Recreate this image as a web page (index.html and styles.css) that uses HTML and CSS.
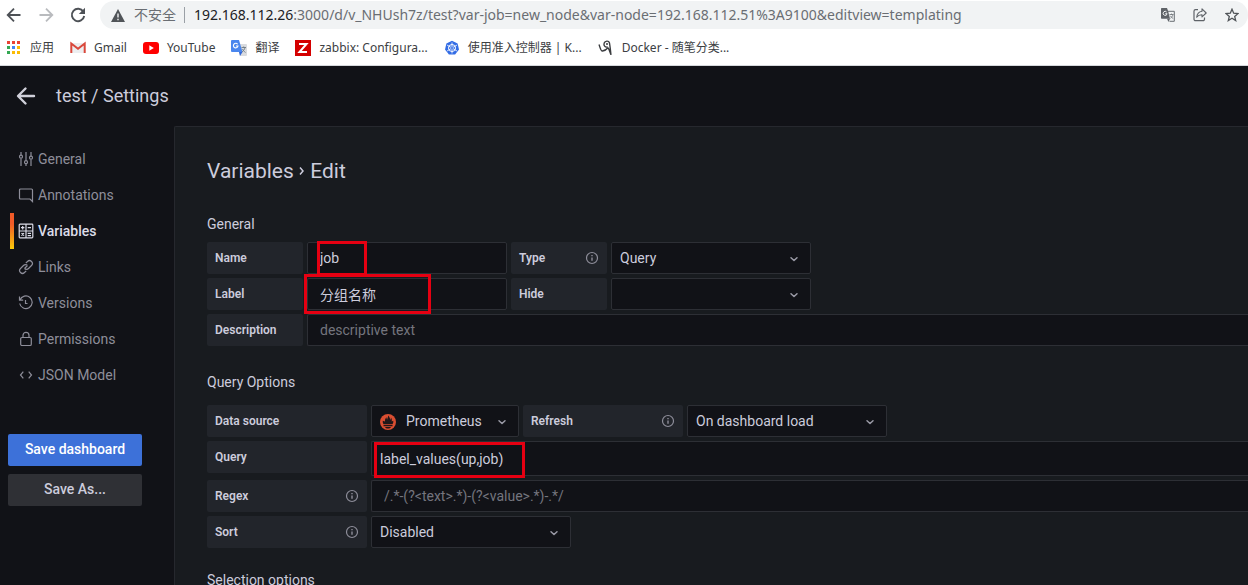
FILE: index.html
```html
<!DOCTYPE html>
<html lang="zh-CN">
<head>
<meta charset="utf-8">
<title>test / Settings</title>
<link rel="stylesheet" href="styles.css">
</head>
<body>
<svg class="defs" aria-hidden="true">
  <symbol id="chevron" viewBox="0 0 16 16"><path d="M5 6.700 8 9.500l3-2.800" fill="none" stroke="currentColor" stroke-width="1.500" stroke-linecap="round" stroke-linejoin="round"/></symbol>
  <symbol id="info" viewBox="0 0 14 14"><circle cx="7" cy="7" r="5.500" fill="none" stroke="currentColor" stroke-width="1.200"/><path d="M7 6.500v3.200M7 4v1.200" stroke="currentColor" stroke-width="1.400"/></symbol>
  <symbol id="gtranslate" viewBox="0 0 16 16"><path d="M6 4h9a1 1 0 0 1 1 1v10a1 1 0 0 1-1 1H9z" fill="#dadce0"/><path d="M1 0h7l3.500 12H1a1 1 0 0 1-1-1V1a1 1 0 0 1 1-1z" fill="#4a86ee"/><path d="m8 12 3.500 0L9 16z" fill="#3367d6"/><path d="M6.600 4.200A2.300 2.300 0 1 0 7 6H4.900" fill="none" stroke="#fff" stroke-width="1.100"/><path d="M10.500 7.500H15M12.700 6.500v1M14 7.500c-.5 2-1.500 3.300-3 4.500M11.500 9c.6 1.400 1.500 2.500 3 3.500" fill="none" stroke="#6f7b85" stroke-width=".9"/></symbol>
</svg>

<div class="app">
  <header class="browser">
    <div class="toolbar">
      <nav class="nav-buttons" aria-label="Navigation">
        <button class="tool" aria-label="Back"><svg width="16" height="16" viewBox="0 0 16 16"><path d="M14.500 8H2M8 1.700 1.700 8 8 14.300" fill="none" stroke="#4d5156" stroke-width="1.800"/></svg></button>
        <button class="tool" aria-label="Forward"><svg width="16" height="16" viewBox="0 0 16 16"><path d="M1.500 8H14M8 1.700 14.300 8 8 14.300" fill="none" stroke="#b9bbbe" stroke-width="1.800"/></svg></button>
        <button class="tool" aria-label="Reload"><svg width="16" height="16" viewBox="0 0 16 16"><path d="M13.300 4.600A6.200 6.200 0 1 0 14.200 9" fill="none" stroke="#4d5156" stroke-width="1.900"/><path d="M15 .8v6.200H8.800z" fill="#4d5156"/></svg></button>
      </nav>
      <div class="omnibox">
        <svg width="14" height="13" viewBox="0 0 14 13"><path d="M7 0l7 13H0z" fill="#505458"/><path d="M7 4.500v4M7 9.700v1.500" stroke="#f1f3f4" stroke-width="1.400"/></svg>
        <span class="insecure">不安全</span>
        <span class="url"><b>192.168.112.26</b>:3000/d/v_NHUsh7z/test?var-job=new_node&amp;var-node=192.168.112.51%3A9100&amp;editview=templating</span>
        <div class="omni-actions">
          <button class="tool" aria-label="Translate"><svg width="14" height="14" viewBox="0 0 14 14"><path d="M7 3.300h6.300v10H8.500" fill="none" stroke="#6a6e73" stroke-width="1"/><path d="M.7 0h5.300l1 2.700L9 10.700H.7A.7.700 0 0 1 0 10V.7A.7.700 0 0 1 .7 0z" fill="#5f6368"/><path d="m6 10.700h3L7.500 14z" fill="#5f6368"/><path d="M5.700 4.100A2 2 0 1 0 6.100 5.700H4.300" fill="none" stroke="#f1f3f4" stroke-width="1"/><path d="M8.500 6.500h4M10.500 5.600v1M12 6.500c-.5 1.800-1.300 2.800-2.500 3.800M9.400 7.800c.6 1.200 1.400 2 2.800 2.700" fill="none" stroke="#6a6e73" stroke-width=".8"/></svg></button>
          <button class="tool" aria-label="Share"><svg width="14" height="14" viewBox="0 0 14 14"><path d="M5 1.700H2.500a1.500 1.500 0 0 0-1.500 1.500v8A1.500 1.500 0 0 0 2.500 12.700h7.500a1.500 1.500 0 0 0 1.500-1.500V9.500" fill="none" stroke="#5f6368" stroke-width="1.200"/><path d="M9 .9 13.200 5 9 8.900V6.700C6.500 6.600 4.900 7.500 3.700 9.200 4 6.200 5.600 3.800 9 3.300z" fill="none" stroke="#5f6368" stroke-width="1.100" stroke-linejoin="round"/></svg></button>
          <button class="tool" aria-label="Bookmark"><svg width="14" height="14" viewBox="0 0 14 14"><path d="m7 1.200 1.700 4 4.300.4-3.300 2.800 1 4.200L7 10.300l-3.700 2.300 1-4.200L1 5.600l4.300-.4z" fill="none" stroke="#505458" stroke-width="1.300"/></svg></button>
        </div>
      </div>
    </div>
    <nav class="bookmarks" aria-label="Bookmarks">
      <a href="#"><svg width="13" height="13" viewBox="0 0 13 13"><path d="M0 0h3v3H0zM5 0h3v3H5zM10 0h3v3h-3z" fill="#ea4335"/><path d="M0 5h3v3H0zM0 10h3v3H0z" fill="#34a853"/><path d="M5 5h3v3H5z" fill="#4285f4"/><path d="M10 5h3v3h-3zM5 10h3v3H5zM10 10h3v3h-3z" fill="#fbbc04"/></svg>应用</a>
      <a href="#"><svg width="16" height="16" viewBox="0 0 16 16"><path d="M2 3h12v10H2z" fill="#eceef0"/><path d="M1.300 13V3.500L8 8.700l6.700-5.200V13" fill="none" stroke="#d9483b" stroke-width="2"/></svg>Gmail</a>
      <a href="#"><svg width="16" height="16" viewBox="0 0 16 16"><rect y="2" width="16" height="12" rx="3" fill="#f00"/><path d="m6.300 5.300 4.500 2.700-4.500 2.700z" fill="#fff"/></svg>YouTube</a>
      <a href="#"><svg width="16" height="16"><use href="#gtranslate"/></svg>翻译</a>
      <a href="#"><svg width="16" height="16" viewBox="0 0 16 16"><path d="M0 0h16v16H0z" fill="#d40000"/><path d="M4 3.900h7.500L4.500 12H12" fill="none" stroke="#fff" stroke-width="2"/></svg>zabbix: Configura...</a>
      <a href="#"><svg width="16" height="16" viewBox="0 0 16 16"><path d="m8 .8 5.600 2.700L15 9.600l-3.900 5H4.900l-3.900-5 1.400-6.100z" fill="#326ce5"/><circle cx="8" cy="8" r="3.500" fill="none" stroke="#fff" stroke-width="1"/><path d="M8 2.500v11M3 5l10 6M3 11l10-6" stroke="#fff" stroke-width=".8"/><circle cx="8" cy="8" r="1" fill="#326ce5"/></svg>使用准入控制器 | K...</a>
      <a href="#"><svg width="16" height="16" viewBox="0 0 16 16"><path d="M1 4.500C2.300 7.500 2.500 11.300 4.500 11c2.200-.4 4-1.500 5.500-3.300M9.700 7C7 7.500 5.300 5.500 6.200 3 7 .7 10.700.3 11.400 2.800c.6 2.400.9 6.500 1.600 12.200M10 7.700c1.200 1.800 2 4.500 3 7" fill="none" stroke="#3b3d40" stroke-width="1.400"/><circle cx="9" cy="4" r="1" fill="#3b3d40"/></svg>Docker - 随笔分类...</a>
    </nav>
  </header>

  <div class="grafana">
    <header class="page-head">
      <button class="tool" aria-label="Go back"><svg width="20" height="20" viewBox="0 0 20 20"><path d="M18 10H2.500M9.500 2.500 2 10l7.500 7.500" fill="none" stroke="#d0d0da" stroke-width="2.400" stroke-linecap="round" stroke-linejoin="round"/></svg></button>
      <h1>test / Settings</h1>
    </header>
    <div class="columns">
      <aside class="sidebar">
        <nav class="menu">
          <a href="#"><svg viewBox="0 0 16 16"><path d="M3 1v3M3 7.500V15M8 1v8.500M8 13v2M13 1v4M13 8.500V15"/><circle cx="3" cy="5.700" r="1.500"/><circle cx="8" cy="11.200" r="1.500"/><circle cx="13" cy="6.700" r="1.500"/></svg>General</a>
          <a href="#"><svg viewBox="0 0 16 16"><path d="M2.500 2h11a1 1 0 0 1 1 1v11.500L12 12H2.500a1 1 0 0 1-1-1V3a1 1 0 0 1 1-1z"/></svg>Annotations</a>
          <a href="#" class="active"><svg viewBox="0 0 16 16"><path d="M2 1.200h12a.8.800 0 0 1 .8.800v12a.8.800 0 0 1-.8.800H2a.8.800 0 0 1-.8-.8V2A.8.800 0 0 1 2 1.200zM8 1v14M1 8h14M3 4.700h3.400M4.700 3v3.400M9.700 4.700H13M3.500 10.200l2.500 2.500M6 10.200l-2.500 2.500M9.700 10.300H13M9.700 12.700H13"/></svg>Variables</a>
          <a href="#"><svg viewBox="0 0 16 16"><path d="M6.500 9.500a2.800 2.800 0 0 0 4 0l3-3A2.800 2.800 0 0 0 9.500 2.500L7.800 4.200M9.500 6.500a2.800 2.800 0 0 0-4 0l-3 3a2.800 2.800 0 0 0 4 4l1.700-1.700M6.500 9.500l3-3"/></svg>Links</a>
          <a href="#"><svg viewBox="0 0 16 16"><path d="M1.500 1.500v3.700h3.700M2 5A6.300 6.300 0 1 1 1.700 8.500M7.500 5v3.500h2"/></svg>Versions</a>
          <a href="#"><svg viewBox="0 0 16 16"><path d="M4 6.500h8a1.300 1.300 0 0 1 1.300 1.300v5.400A1.300 1.300 0 0 1 12 14.500H4a1.300 1.300 0 0 1-1.300-1.300V7.800A1.300 1.300 0 0 1 4 6.500zM5 6.500V4.300a3 3 0 0 1 6 0v2.200"/></svg>Permissions</a>
          <a href="#"><svg viewBox="0 0 16 16"><path d="M5.300 4.700 2.500 8l2.800 3.300M10.700 4.700 13.500 8l-2.800 3.300"/></svg>JSON Model</a>
        </nav>
        <div class="actions">
          <button class="btn primary">Save dashboard</button>
          <button class="btn">Save As...</button>
        </div>
      </aside>

      <main class="panel">
        <h2>Variables <svg width="8" height="10" viewBox="0 0 8 10"><path d="m2 1.500 3 3.500-3 3.500" fill="none" stroke="currentColor" stroke-width="1.500"/></svg> Edit</h2>

        <section class="group">
          <h3>General</h3>
          <div class="row">
            <label class="label" for="name">Name</label>
            <div class="field marked mark-name"><input id="name" type="text" value="job"></div>
            <label class="label" for="type">Type <svg class="info"><use href="#info"/></svg></label>
            <div class="field"><select id="type"><option>Query</option></select><svg class="chevron"><use href="#chevron"/></svg></div>
          </div>
          <div class="row">
            <label class="label" for="label">Label</label>
            <div class="field marked mark-label"><input id="label" type="text" value="分组名称"></div>
            <label class="label" for="hide">Hide</label>
            <div class="field"><select id="hide"><option></option></select><svg class="chevron"><use href="#chevron"/></svg></div>
          </div>
          <div class="row">
            <label class="label" for="desc">Description</label>
            <div class="field wide"><input id="desc" type="text" placeholder="descriptive text"></div>
          </div>
        </section>

        <section class="group query">
          <h3>Query Options</h3>
          <div class="row">
            <label class="label" for="source">Data source</label>
            <div class="field source">
              <svg class="logo" viewBox="0 0 16 16"><circle cx="8" cy="8" r="8" fill="#da4e31"/><path d="M3.500 10.200h9c.8-1.200 1-2.300.7-3.400l-1.500.7c.4-1.600 0-2.800-.8-3.900.1 1.100-.3 1.900-.6 2.500C10.200 4.300 9.300 3 8.300 1.500 8.100 3 7.500 4 7.100 5.800 6.700 5 6.500 4.200 6.500 3.300 5.200 4.800 4.800 6 5 7.500l-2.200-.7c-.2 1.300 0 2.300.7 3.400zM3.500 11h9v1.300h-9zM5 13h6c-.6 1.100-1.600 1.600-3 1.600S5.600 14.100 5 13z" fill="#201719"/></svg>
              <select id="source"><option>Prometheus</option></select><svg class="chevron"><use href="#chevron"/></svg>
            </div>
            <label class="label" for="refresh">Refresh <svg class="info"><use href="#info"/></svg></label>
            <div class="field"><select id="refresh"><option>On dashboard load</option></select><svg class="chevron"><use href="#chevron"/></svg></div>
          </div>
          <div class="row">
            <label class="label" for="query">Query</label>
            <div class="field wide tall marked mark-query"><input id="query" type="text" value="label_values(up,job)"></div>
          </div>
          <div class="row">
            <label class="label" for="regex">Regex <svg class="info"><use href="#info"/></svg></label>
            <div class="field wide"><input id="regex" type="text" placeholder="/.*-(?&lt;text&gt;.*)-(?&lt;value&gt;.*)-.*/"></div>
          </div>
          <div class="row">
            <label class="label" for="sort">Sort <svg class="info"><use href="#info"/></svg></label>
            <div class="field"><select id="sort"><option>Disabled</option></select><svg class="chevron"><use href="#chevron"/></svg></div>
          </div>
        </section>

        <section class="group">
          <h3>Selection options</h3>
        </section>
      </main>
    </div>
  </div>
</div>
</body>
</html>
```
FILE: styles.css
```css
*, *::after { box-sizing: border-box; }

body {
  margin: 0;
  background: #111217;
  font: 14px/20px Roboto, "Noto Sans CJK SC", sans-serif;
}

button, input, select { font: inherit; color: inherit; }
a { color: inherit; text-decoration: none; }
h1, h2, h3 { margin: 0; font-weight: 400; }

.defs { position: absolute; width: 0; height: 0; }

.app {
  display: flex;
  flex-direction: column;
  height: 100vh;
  overflow: hidden;
}

.tool {
  display: flex;
  padding: 0;
  border: 0;
  background: none;
}

/* Browser chrome */
.browser {
  flex: none;
  background: #fff;
  border-bottom: 1px solid #d5d8dc;
  color: #3c4043;
  font-family: "Noto Sans", "Noto Sans CJK SC", sans-serif;
}

.toolbar {
  display: flex;
  align-items: center;
  gap: 14px;
  padding: 1px 0 1px 6px;
}

.nav-buttons { display: flex; gap: 16px; }

.omnibox {
  display: flex;
  flex: 1;
  align-items: center;
  height: 28px;
  padding: 0 9px 0 11px;
  border-radius: 14px;
  background: #f1f3f4;
  color: #6a6e73;
  white-space: nowrap;
}

.insecure {
  margin: 0 8px 0 9px;
  line-height: 16px;
}

.url {
  flex: 1;
  padding-left: 9px;
  border-left: 1px solid #9aa0a6;
  line-height: 16px;
}

.url b { color: #202124; font-weight: 400; }

.omni-actions { display: flex; gap: 18px; }

.bookmarks {
  display: flex;
  align-items: center;
  gap: 16px;
  height: 35px;
  padding: 0 7px;
  font-size: 12px;
  white-space: nowrap;
}

.bookmarks a {
  display: flex;
  align-items: center;
  gap: 8px;
}

.bookmarks a:first-child { gap: 10px; }

/* Settings page */
.grafana {
  display: flex;
  flex: 1;
  flex-direction: column;
  min-height: 0;
  color: #ccccdc;
}

.page-head {
  display: flex;
  flex: none;
  align-items: center;
  gap: 20px;
  height: 60px;
  padding: 0 16px;
}

.page-head h1 { font-size: 18px; line-height: 24px; }

.columns { display: flex; flex: 1; min-height: 0; }

.sidebar { flex: none; width: 174px; padding-top: 15px; }

.menu a {
  display: flex;
  align-items: center;
  gap: 4px;
  height: 36px;
  padding-left: 18px;
  color: #8e8e9a;
}

.menu svg {
  width: 16px;
  height: 16px;
  fill: none;
  stroke: currentColor;
  stroke-width: 1.2;
}

.menu .active {
  margin-left: 10px;
  padding-left: 8px;
  background: linear-gradient(#f05a28 30%, #fbca0a) left / 4px 100% no-repeat;
  color: #dcdce8;
  font-weight: 500;
}

.actions {
  display: flex;
  flex-direction: column;
  gap: 8px;
  padding: 41px 32px 0 8px;
}

.btn {
  height: 32px;
  padding: 0 0 2px;
  border: 0;
  border-radius: 2px;
  background: #2f3035;
  font-weight: 500;
}

.btn.primary { background: #3d71d9; color: #fff; }

.panel {
  flex: 1;
  min-width: 0;
  padding: 30px 0 0 32px;
  overflow: hidden;
  border: 1px solid #26282e;
  border-width: 1px 0 0 1px;
  border-radius: 2px 0 0 0;
  background: #181b1f;
}

.panel h2 {
  margin-bottom: 29px;
  font-size: 21px;
  line-height: 28px;
}

.panel h2 svg { margin: 0 -1px; vertical-align: 2px; }

.group { margin-bottom: 22px; }

.group h3 {
  margin-bottom: 8px;
  font-size: 14px;
  line-height: 20px;
}

.group.query { padding-top: 4px; }
.group.query h3 { margin-bottom: 13px; }

.row { display: flex; gap: 4px; margin-bottom: 4px; }

.label {
  display: flex;
  flex: none;
  align-items: center;
  justify-content: space-between;
  width: 96px;
  height: 32px;
  padding: 0 8px;
  border-radius: 2px;
  background: #22252b;
  font-size: 12px;
  font-weight: 600;
}

.query .label { width: 160px; }

.info { width: 14px; height: 14px; color: #8e8e9a; }

.field {
  position: relative;
  flex: none;
  width: 200px;
  height: 32px;
}

.field.source { width: 148px; }
.field.wide { flex: 1; }
.field.tall { height: 35px; }

.field input,
.field select {
  display: block;
  width: 100%;
  height: 100%;
  padding: 0 12px;
  border: 1px solid #2d2f35;
  border-radius: 2px;
  background: #111217;
  outline: 0;
}

.field select { padding: 0 8px; appearance: none; }
.field.source select { padding-left: 34px; }
.field.wide input { border-right: 0; border-radius: 2px 0 0 2px; }
.field.tall input { padding-left: 8px; }

.field input::placeholder { color: #74757e; opacity: 1; }

.chevron {
  position: absolute;
  top: 9px;
  right: 9px;
  width: 16px;
  height: 16px;
  color: #9a9aa6;
  pointer-events: none;
}

.logo {
  position: absolute;
  top: 9px;
  left: 9px;
  width: 16px;
  height: 16px;
  pointer-events: none;
}

/* Red highlight frames over the fields */
.marked::after {
  content: "";
  position: absolute;
  z-index: 1;
  border: 3px solid #e60012;
  pointer-events: none;
}

.mark-name::after { top: -1px; left: 10px; width: 50px; height: 35px; }
.mark-label::after { top: -4px; left: -3px; width: 127px; height: 40px; }
.mark-query::after { top: 1px; left: 3px; width: 151px; height: 36px; }
```
